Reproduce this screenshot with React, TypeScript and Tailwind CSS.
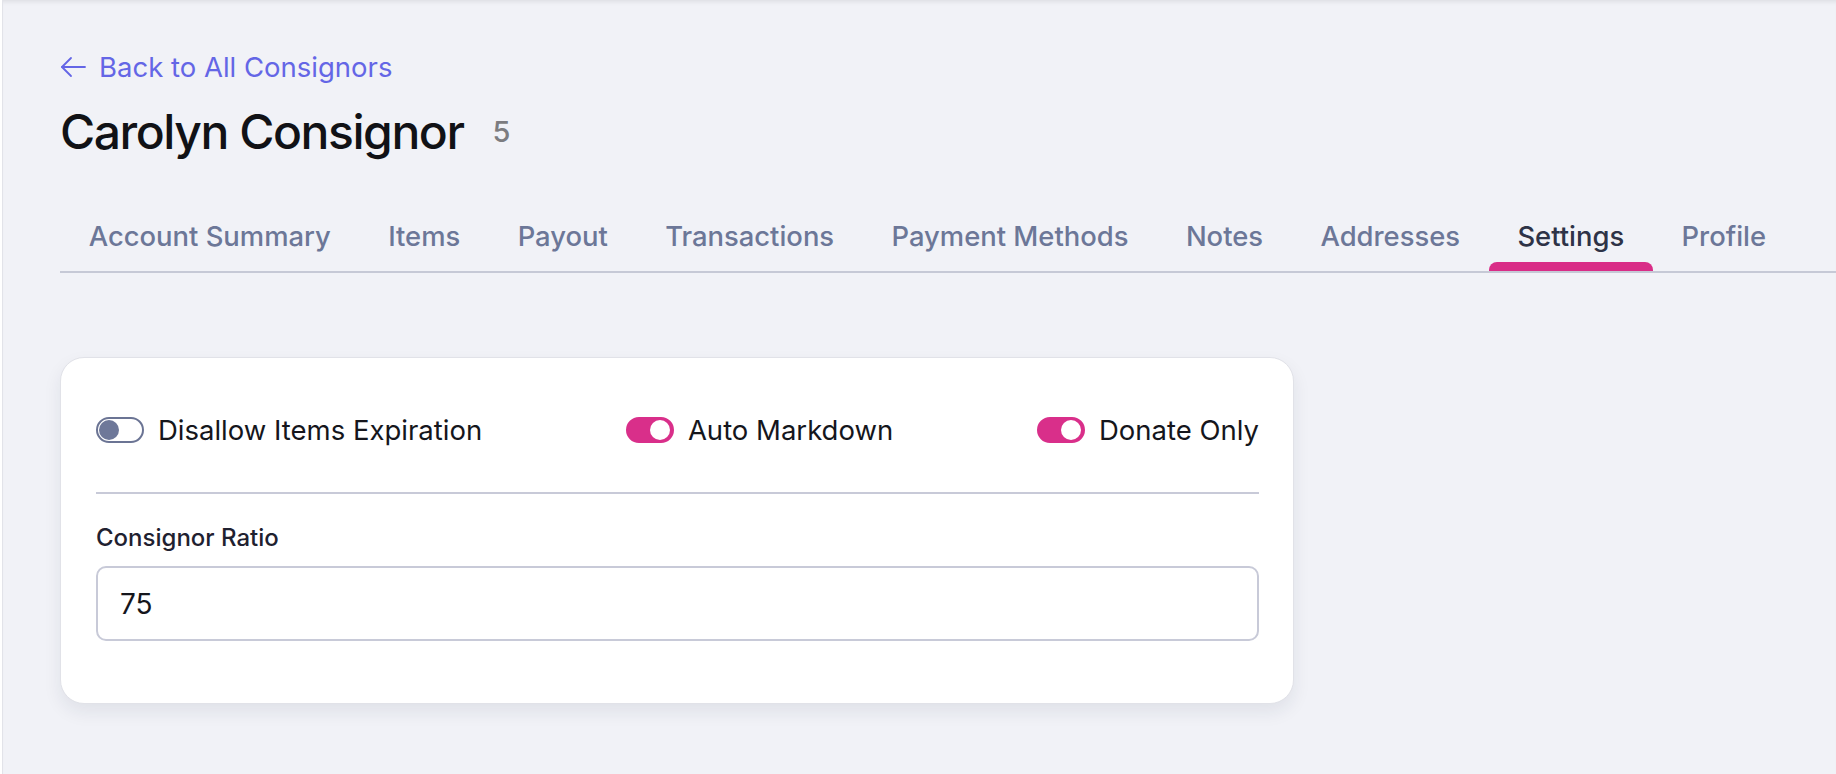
import { useState } from 'react';

const tabs = [
  'Account Summary',
  'Items',
  'Payout',
  'Transactions',
  'Payment Methods',
  'Notes',
  'Addresses',
  'Settings',
  'Profile',
];

function Toggle({ on, onChange }: { on: boolean; onChange: (v: boolean) => void }) {
  return (
    <button
      type="button"
      onClick={() => onChange(!on)}
      className={`relative flex h-[26px] w-[48px] shrink-0 items-center rounded-full border-2 ${
        on ? 'border-[#d92f8a] bg-[#d92f8a]' : 'border-[#6b7494] bg-white'
      }`}
    >
      <span
        className={`absolute top-[1px] h-[20px] w-[20px] rounded-full ${
          on ? 'right-[2px] bg-white' : 'left-[1px] bg-[#6e7899]'
        }`}
      />
    </button>
  );
}

export default function App() {
  const [active, setActive] = useState('Settings');
  const [disallow, setDisallow] = useState(false);
  const [markdown, setMarkdown] = useState(true);
  const [donate, setDonate] = useState(true);
  const [ratio, setRatio] = useState('75');

  return (
    <div
      className="min-h-[774px] w-full overflow-hidden bg-white pl-[2px]"
      style={{ fontFamily: 'Inter, "Noto Sans", sans-serif' }}
    >
      <div className="min-h-[774px] border-l border-[#e2e3e9] bg-[#f1f2f7] pl-[57px] pt-[50px] shadow-[inset_0_5px_4px_-3px_rgba(0,0,0,0.08)]">
        <a href="#" className="flex items-center gap-[13px] text-[27.5px] leading-[34px] text-[#6466e6]">
          <svg width="26" height="24" viewBox="0 0 26 24" fill="none" stroke="currentColor" strokeWidth="1.8" strokeLinecap="round" strokeLinejoin="round">
            <path d="M11 3 L2 12 L11 21" />
            <path d="M2 12 H25" />
          </svg>
          Back to All Consignors
        </a>

        <div className="mt-[20px] flex items-center">
          <h1 className="text-[48px] font-medium leading-[56px] tracking-[-0.03em] text-[#111216]">
            Carolyn Consignor
          </h1>
          <span className="ml-[29px] text-[29px] font-medium text-[#7c7c80]">5</span>
        </div>

        <nav className="mt-[59px] flex border-b-2 border-[#c6c9d6]">
          {tabs.map((t) => (
            <button
              key={t}
              type="button"
              onClick={() => setActive(t)}
              className={`relative px-[28.7px] pb-[18px] text-[27.4px] font-medium leading-[34px] ${
                active === t ? 'text-[#2e3347]' : 'text-[#6c7798]'
              }`}
            >
              {t}
              {active === t && (
                <span className="absolute bottom-0 left-0 right-0 h-[9px] rounded-t-[8px] bg-[#d92d87]" />
              )}
            </button>
          ))}
        </nav>

        <div className="mt-[84px] w-[1234px] rounded-[24px] border border-[#e1e2e8] bg-white pb-[62px] pl-[35px] pr-[34px] pt-[55px] shadow-[0_8px_18px_rgba(30,35,70,0.08)]">
          <div className="flex items-center justify-between">
            <label className="flex items-center gap-[14px] text-[27.5px] leading-[34px] text-[#15161c]">
              <Toggle on={disallow} onChange={setDisallow} />
              Disallow Items Expiration
            </label>
            <label className="flex items-center gap-[14px] text-[27.5px] leading-[34px] text-[#15161c]">
              <Toggle on={markdown} onChange={setMarkdown} />
              Auto Markdown
            </label>
            <label className="flex items-center gap-[14px] text-[27.5px] leading-[34px] text-[#15161c]">
              <Toggle on={donate} onChange={setDonate} />
              Donate Only
            </label>
          </div>

          <div className="mt-[45px] h-[2px] bg-[#c8cad8]" />

          <label className="mt-[29px] block text-[24px] font-medium leading-[29px] text-[#1f2130]">
            Consignor Ratio
          </label>
          <input
            value={ratio}
            onChange={(e) => setRatio(e.target.value)}
            className="mt-[14px] block h-[75px] w-full rounded-[10px] border-2 border-[#c8cad8] bg-white pl-[22px] text-[28px] text-[#15161c] outline-none"
          />
        </div>
      </div>
    </div>
  );
}
